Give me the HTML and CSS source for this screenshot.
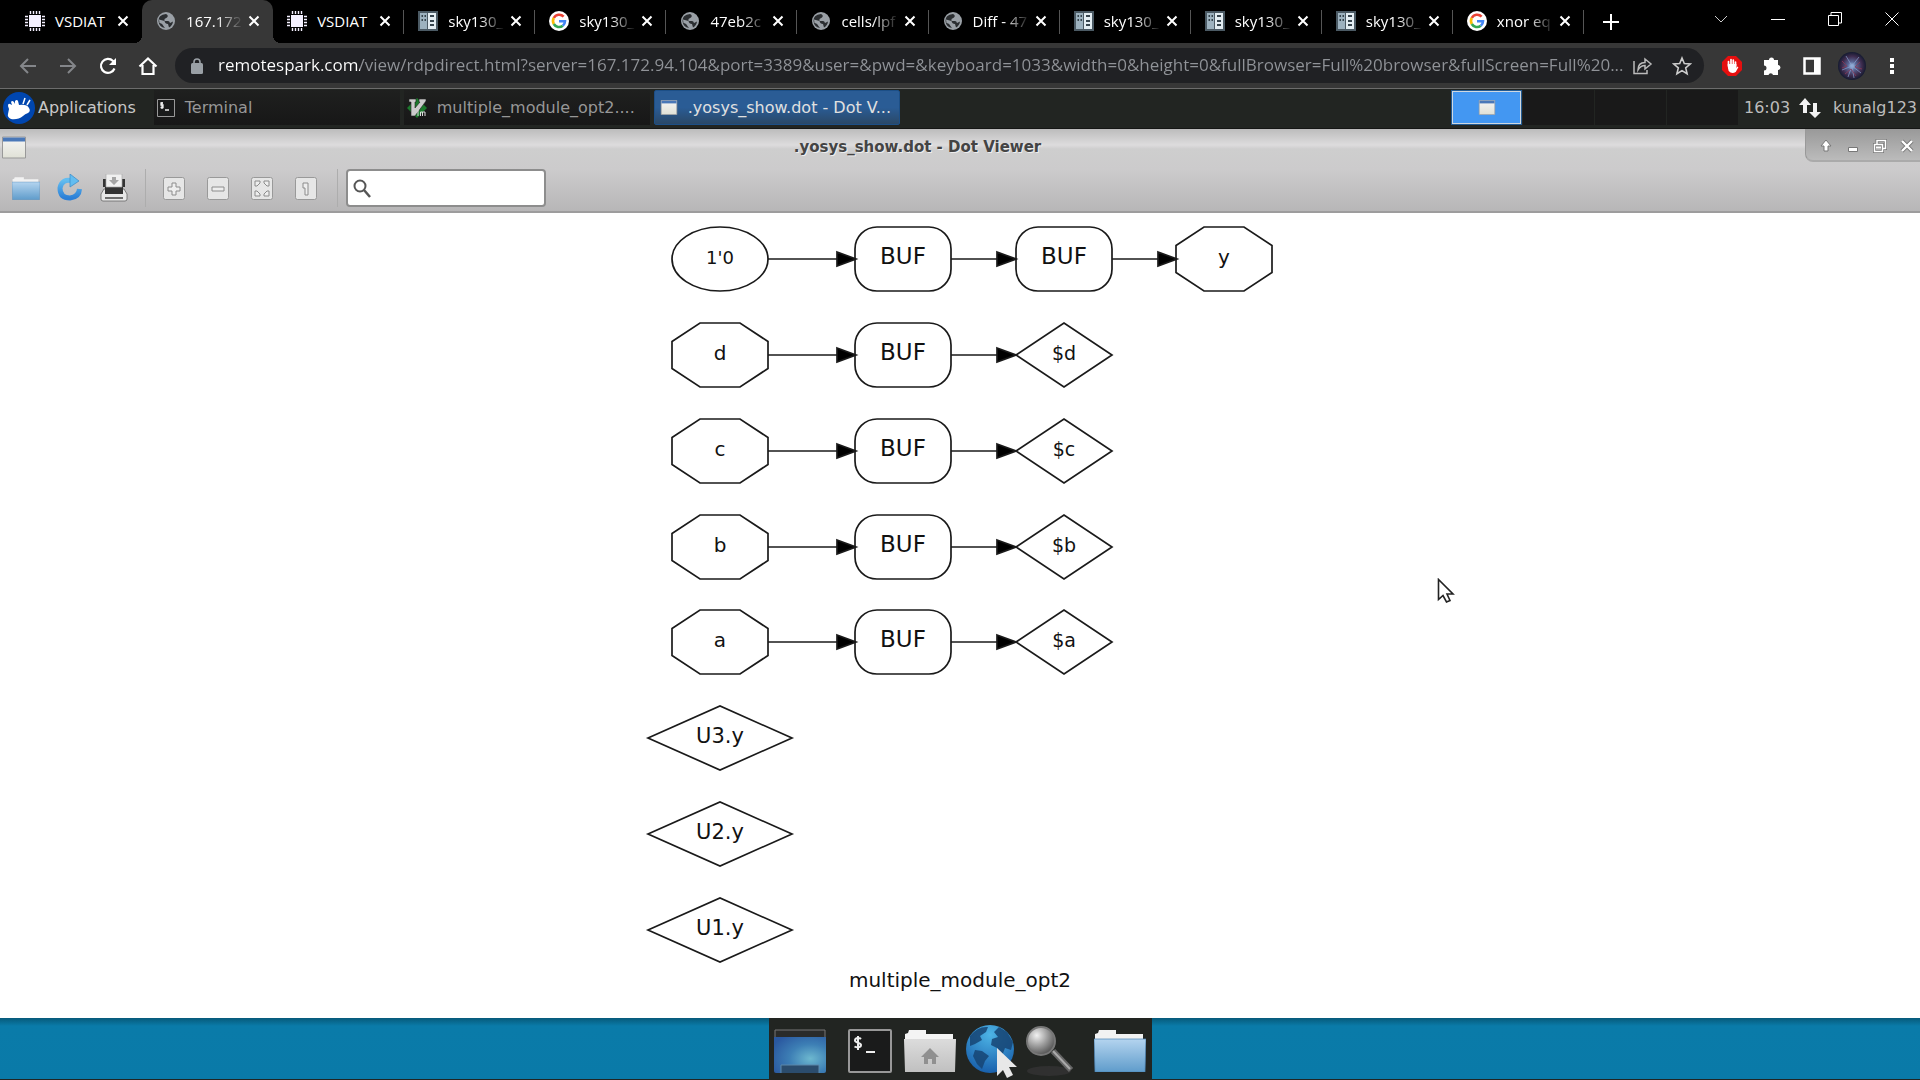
FILE: index.html
```
<!DOCTYPE html>
<html lang="en">
<head>
<meta charset="utf-8">
<title>.yosys_show.dot - Dot Viewer</title>
<link rel="stylesheet" href="styles.css">
</head>
<body>
<svg class="defs" aria-hidden="true">
  <defs>
    <linearGradient id="blueFolder" x1="0" y1="0" x2="0" y2="1"><stop offset="0" stop-color="#b4d4ef"/><stop offset="1" stop-color="#5f9ccb"/></linearGradient>
    <linearGradient id="greyFolder" x1="0" y1="0" x2="0" y2="1"><stop offset="0" stop-color="#dcdcdc"/><stop offset="1" stop-color="#c0c0c0"/></linearGradient>
    <linearGradient id="arrowBlue" x1="0" y1="0" x2="0" y2="1"><stop offset="0" stop-color="#63bdf0"/><stop offset="1" stop-color="#2c7fd6"/></linearGradient>
    <linearGradient id="windowFill" x1="0" y1="0" x2="0" y2="1"><stop offset="0" stop-color="#f6f6f6"/><stop offset="1" stop-color="#e0e1d6"/></linearGradient>
    <radialGradient id="deskFill" cx=".7" cy=".6" r=".8"><stop offset="0" stop-color="#6db8cf"/><stop offset=".5" stop-color="#3d7fb5"/><stop offset="1" stop-color="#2a58a0"/></radialGradient>
    <radialGradient id="globeFill" cx=".5" cy=".2" r=".9"><stop offset="0" stop-color="#4db4e6"/><stop offset="1" stop-color="#1255a4"/></radialGradient>
    <radialGradient id="lensFill" cx=".35" cy=".3" r=".8"><stop offset="0" stop-color="#f2f2f2"/><stop offset=".5" stop-color="#999"/><stop offset="1" stop-color="#444"/></radialGradient>
    <radialGradient id="avatarFill"><stop offset="0" stop-color="#a9cdf0"/><stop offset=".3" stop-color="#5a6796"/><stop offset=".7" stop-color="#3e2c4e"/><stop offset="1" stop-color="#141a30"/></radialGradient>
    <symbol id="chip" viewBox="0 0 20 20"><path d="M4 4h12v12H4z" fill="#f4f0ff"/><path d="M5.500 0v3M8.500 0v3M11.500 0v3M14.500 0v3M5.500 17v3M8.500 17v3M11.500 17v3M14.500 17v3M0 5.500h3M0 8.500h3M0 11.500h3M0 14.500h3M17 5.500h3M17 8.500h3M17 11.500h3M17 14.500h3" stroke="#f4f0ff" stroke-width="1.400"/></symbol>
    <symbol id="world" viewBox="0 0 20 20"><circle cx="10" cy="10" r="9" fill="#9aa0a6"/><path d="M10 3q3 1.500 1 3.500L8.500 8v2H12q1.500 0 2 2l3-1.500q-.5 4-4 6l-1-3.500q-3 0-3.500-3L3 8.500 3.500 12q2 0 3 1.500T9 17q-6-1-6.500-7T10 3z" fill="#2b2e31"/></symbol>
    <symbol id="doc" viewBox="0 0 20 20"><path d="M0 0h20v20H0z" fill="#4b5a64"/><path d="M2 2h7v16H2z" fill="#9db2bf"/><path d="M10 2h8v16h-8z" fill="#e3edf2"/><path d="M3.500 4h1.500v2H3.500zM6.500 4H8v2H6.500zM3.500 8h1.500v2H3.500zM6.500 8H8v2H6.500zM12 4h4v2h-4zM12 9h4v2h-4zM12 13h4v2h-4z" fill="#36444d"/></symbol>
    <symbol id="google" viewBox="0 0 20 20"><circle cx="10" cy="10" r="10" fill="#fff"/><g fill="none" stroke-width="2.600"><path d="M4.800 7a6 6 0 0 1 9.800-1.300" stroke="#ea4335"/><path d="M4.800 13a6 6 0 0 1 0-6" stroke="#fbbc05"/><path d="M13.800 14.700a6 6 0 0 1-9-1.700" stroke="#34a853"/><path d="M10 10.200h6a6 6 0 0 1-2.200 4.500" stroke="#4285f4"/></g></symbol>
    <symbol id="cross" viewBox="0 0 12 12"><path d="M1.500 1.500l9 9M10.500 1.500l-9 9" stroke="#fff" stroke-width="2"/></symbol>
    <symbol id="window" viewBox="0 0 24 22"><path d="M.5.5h23v21H.5z" fill="url(#windowFill)" stroke="#999"/><path d="M1 1h22v4H1z" fill="#4a78b8"/></symbol>
    <symbol id="terminal" viewBox="0 0 44 44"><rect x="1" y="1" width="42" height="42" rx="1" fill="#1a1b1b" stroke="#989898" stroke-width="2"/><path d="M13 10c-2-2-6-1-6 1.500s6 2 6 4.500-4 3-6.500 1.500M10 7v14M18 23h9" fill="none" stroke="#eee" stroke-width="2"/></symbol>
    <symbol id="terminalSmall" viewBox="0 0 18 18"><path d="M.5.500h17v17H.5z" fill="#1a1b1b" stroke="#999"/><path d="M6 4H4v2h2v2.500H3.500M5 3v7M8 11h4" fill="none" stroke="#eee" stroke-width="1.300"/></symbol>
    <symbol id="folder" viewBox="0 0 52 42"><path d="M1 8V4l3-1 1-3h17v4h27v6H1z" fill="#f2f2f2"/><path d="M0 9h52l-1 33H1z" fill="url(#blueFolder)" stroke="#4c84b5" stroke-width=".7"/></symbol>
  </defs>
</svg>

<header class="browser">
  <div class="tabstrip">
    <nav class="tabs" aria-label="Tabs">
      <div class="tab"><svg class="favicon"><use href="#chip"/></svg><a href="#">VSDIAT</a><button aria-label="Close tab"><svg><use href="#cross"/></svg></button></div>
      <div class="tab fade active"><svg class="favicon"><use href="#world"/></svg><a href="#">167.172</a><button aria-label="Close tab"><svg><use href="#cross"/></svg></button></div>
      <div class="tab ruled"><svg class="favicon"><use href="#chip"/></svg><a href="#">VSDIAT</a><button aria-label="Close tab"><svg><use href="#cross"/></svg></button></div>
      <div class="tab fade ruled"><svg class="favicon"><use href="#doc"/></svg><a href="#">sky130_</a><button aria-label="Close tab"><svg><use href="#cross"/></svg></button></div>
      <div class="tab fade ruled"><svg class="favicon"><use href="#google"/></svg><a href="#">sky130_</a><button aria-label="Close tab"><svg><use href="#cross"/></svg></button></div>
      <div class="tab fade ruled"><svg class="favicon"><use href="#world"/></svg><a href="#">47eb2c</a><button aria-label="Close tab"><svg><use href="#cross"/></svg></button></div>
      <div class="tab fade ruled"><svg class="favicon"><use href="#world"/></svg><a href="#">cells/lpf</a><button aria-label="Close tab"><svg><use href="#cross"/></svg></button></div>
      <div class="tab fade ruled"><svg class="favicon"><use href="#world"/></svg><a href="#">Diff - 47</a><button aria-label="Close tab"><svg><use href="#cross"/></svg></button></div>
      <div class="tab fade ruled"><svg class="favicon"><use href="#doc"/></svg><a href="#">sky130_</a><button aria-label="Close tab"><svg><use href="#cross"/></svg></button></div>
      <div class="tab fade ruled"><svg class="favicon"><use href="#doc"/></svg><a href="#">sky130_</a><button aria-label="Close tab"><svg><use href="#cross"/></svg></button></div>
      <div class="tab fade ruled"><svg class="favicon"><use href="#doc"/></svg><a href="#">sky130_</a><button aria-label="Close tab"><svg><use href="#cross"/></svg></button></div>
      <div class="tab fade ruled"><svg class="favicon"><use href="#google"/></svg><a href="#">xnor eq</a><button aria-label="Close tab"><svg><use href="#cross"/></svg></button></div>
    </nav>
    <button class="newtab" aria-label="New tab"><svg width="16" height="16"><path d="M8 0v16M0 8h16" stroke="#fff" stroke-width="2"/></svg></button>
    <div class="winctl">
      <button aria-label="Search tabs"><svg width="14" height="14"><path d="M1 4l6 6 6-6" fill="none" stroke="#ccc"/></svg></button>
      <button aria-label="Minimize"><svg width="14" height="14"><path d="M0 7.500h14" stroke="#fff"/></svg></button>
      <button aria-label="Restore"><svg width="14" height="14"><path d="M.5 3.500h10v10H.5zM3 3V.5h10.500V11H11" fill="none" stroke="#fff"/></svg></button>
      <button aria-label="Close"><svg width="14" height="14"><path d="M.5.5l13 13M13.500.5l-13 13" stroke="#fff"/></svg></button>
    </div>
  </div>
  <div class="navbar">
    <div class="navbtns">
      <button aria-label="Back"><svg width="20" height="20"><path d="M18 10H3M10 3l-7 7 7 7" fill="none" stroke="#84868a" stroke-width="2"/></svg></button>
      <button aria-label="Forward"><svg width="20" height="20"><path d="M2 10h15M10 3l7 7-7 7" fill="none" stroke="#84868a" stroke-width="2"/></svg></button>
      <button aria-label="Reload"><svg width="20" height="20"><path d="M16.500 12.500A7 7 0 1 1 15 5l2 2" fill="none" stroke="#fff" stroke-width="2.200"/><path d="M18 2v7h-7z" fill="#fff"/></svg></button>
      <button aria-label="Home"><svg width="20" height="20"><path d="M1.500 10.500L10 2.500l8.500 8M4.500 9v9h11V9" fill="none" stroke="#fff" stroke-width="2.200"/></svg></button>
    </div>
    <div class="omnibox">
      <svg width="12" height="16"><rect y="5" width="12" height="11" rx="1.500" fill="#9aa0a6"/><path d="M3 6V4a3 3 0 0 1 6 0v2" fill="none" stroke="#9aa0a6" stroke-width="1.600"/></svg>
      <input class="url" aria-label="Address" value="remotespark.com/view/rdpdirect.html?server=167.172.94.104&amp;port=3389&amp;user=&amp;pwd=&amp;keyboard=1033&amp;width=0&amp;height=0&amp;fullBrowser=Full%20browser&amp;fullScreen=Full%20...">
      <button aria-label="Share"><svg width="20" height="20"><path d="M1 5v12.500h13V14M5 14c0-5 3-7.500 7-7.500V3l6 5-6 5V9.500c-3 0-5 1-7 4.500z" fill="none" stroke="#bbb" stroke-width="1.500"/></svg></button>
      <button aria-label="Bookmark"><svg width="20" height="20"><path d="M10 2l2.300 5.500 6 .5-4.600 3.900 1.400 5.800L10 14.600l-5.100 3.100 1.400-5.800L1.700 8l6-.5z" fill="none" stroke="#ccc" stroke-width="1.600"/></svg></button>
    </div>
    <div class="exts">
      <button aria-label="Ad blocker"><svg width="20" height="20"><path d="M6 0h8l6 6v8l-6 6H6l-6-6V6z" fill="#e60f0f"/><path d="M6.500 10V5.500M9 9V3.500M11.300 9V4M13.500 10V6" stroke="#fff" stroke-width="1.700" stroke-linecap="round"/><path d="M5.700 8h8.700v4l1-1.500 1 .8-2.700 4.700q-4 2.500-7-1-1-2-1-7z" fill="#fff"/></svg></button>
      <button aria-label="Extensions"><svg width="20" height="20"><path d="M2 4h5a2.500 2.500 0 0 1 5 0h4v5a2.500 2.500 0 0 1 0 5v5h-5a2.300 2.300 0 0 0-4.500 0H2v-4.500a2.500 2.500 0 0 0 0-5z" fill="#fff"/></svg></button>
      <button aria-label="Side panel"><svg width="20" height="20"><path d="M2.500 2.500h15v15h-15z" fill="none" stroke="#fff" stroke-width="2.500"/><path d="M12 2h6v16h-6z" fill="#fff"/></svg></button>
      <button aria-label="Profile"><svg width="28" height="28"><circle cx="14" cy="14" r="14" fill="url(#avatarFill)"/><path d="M14 14L8 4M14 14l7-9M14 14L4 18M14 14l9 7M14 14l-4 11M14 14l2 12" stroke="#88a0d0" stroke-width="1" opacity=".7"/><path d="M4 9l5 5-5 2M22 10l-5 5 7 2M7 22l6-5 5 7" fill="none" stroke="#8b3a56" opacity=".8"/></svg></button>
      <button aria-label="Menu"><svg width="20" height="20"><path d="M8 2h4v4H8zM8 8h4v4H8zM8 14h4v4H8z" fill="#fff"/></svg></button>
    </div>
  </div>
</header>

<div class="panel">
  <button class="apps"><svg width="32" height="32"><circle cx="16" cy="16" r="16" fill="#0046af"/><path d="M6 17l-1-3q0-3 2-2l2 1-1-3q1-2 3 0l1 2V9q2-2 3 0l1 4q8-1 10 3 2 3-1 5-3 1-5 3-5 4-12 3-4-2-3-5z" fill="#fff"/><path d="M20 12l2-6M24 13l3-5" stroke="#fff" stroke-width="1.500"/></svg>Applications</button>
  <div class="tasks">
    <button class="task"><svg width="18" height="18"><use href="#terminalSmall"/></svg><span>Terminal</span></button>
    <button class="task"><svg width="20" height="20"><path d="M10 0l10 10-10 10L0 10z" fill="#1b7a2c"/><path d="M2 1h7v3H8v6l5-6h-1V1h7v2L8 18H4V4H2z" fill="#ccc" stroke="#222" stroke-width=".6"/><path d="M11 12v6M13.500 18v-4h2v4M15.500 14h2.500v4" fill="none" stroke="#ddd" stroke-width="1"/></svg><span>multiple_module_opt2....</span></button>
    <button class="task current"><svg width="18" height="15"><use href="#window"/></svg><span>.yosys_show.dot - Dot V...</span></button>
  </div>
  <div class="pager">
    <button class="on" aria-label="Workspace 1"><svg width="18" height="15"><use href="#window"/></svg></button>
    <button aria-label="Workspace 2"></button>
    <button aria-label="Workspace 3"></button>
    <button aria-label="Workspace 4"></button>
  </div>
  <time class="clock">16:03</time>
  <svg class="net" width="22" height="22"><path d="M6 1l6 7H8v8H4V8H0zM16 21l-6-6h4V6h4v9h4z" fill="#f2f2f2"/></svg>
  <button class="user">kunalg123</button>
</div>

<main class="viewer">
  <div class="chrome">
    <div class="titlebar">
      <svg width="24" height="23"><use href="#window"/></svg>
      <h1>.yosys_show.dot - Dot Viewer</h1>
      <div class="frame">
        <button aria-label="Shade"><svg width="14" height="14"><path d="M7 1l5 6H9v5H5V7H2z" fill="#fff" stroke="#777"/></svg></button>
        <button aria-label="Minimize"><svg width="14" height="14"><path d="M2.500 8.500h9v4h-9z" fill="#fff" stroke="#777"/></svg></button>
        <button aria-label="Restore"><svg width="14" height="14"><path d="M4 5V1.500h8.500v8H10M1.500 5.500h8v7h-8z" fill="none" stroke="#777" stroke-width="3"/><path d="M4 5V1.500h8.500v8H10M1.500 5.500h8v7h-8zM3 8.500h5" fill="none" stroke="#fff" stroke-width="1.500"/></svg></button>
        <button aria-label="Close"><svg width="14" height="14"><path d="M2 2l10 10M12 2L2 12" stroke="#777" stroke-width="4"/><path d="M2 2l10 10M12 2L2 12" stroke="#fff" stroke-width="2.400"/></svg></button>
      </div>
    </div>
    <div class="toolbar">
      <div class="tools">
        <button aria-label="Open"><svg width="28" height="23"><use href="#folder"/></svg></button>
        <button aria-label="Reload"><svg width="28" height="28"><path d="M17 7Q6 4 4 14q0 10 10 10 9-1 9.500-9" fill="none" stroke="url(#arrowBlue)" stroke-width="5"/><path d="M14 0l9 7-9 6z" fill="#63bdf0" stroke="#3689c9" stroke-width=".7"/></svg></button>
        <button aria-label="Print"><svg width="28" height="28"><path d="M1 20l3-5h20l3 5v5q0 2-2 2H3q-2 0-2-2z" fill="#e8e8e8" stroke="#666" stroke-width=".8"/><path d="M5 12h18v8H5zM3 5h3v8H3zM22 5h3v8h-3z" fill="#333"/><path d="M6 0h16v13H6z" fill="#f0f0f0" stroke="#aaa" stroke-width=".7"/><path d="M12 3h4v3h3l-5 5-5-5h3z" fill="#a5a5a5"/><path d="M5 24h18" stroke="#444" stroke-width="1.500"/></svg></button>
      </div>
      <div class="tools">
        <button aria-label="Zoom in"><svg width="22" height="23"><rect x=".5" y=".5" width="21" height="22" rx="2" fill="#e6e6e6" stroke="#999"/><path d="M9 6h4v4h4v4h-4v4H9v-4H5v-4h4z" fill="#eee" stroke="#8c8c8c"/></svg></button>
        <button aria-label="Zoom out"><svg width="22" height="23"><rect x=".5" y=".5" width="21" height="22" rx="2" fill="#e6e6e6" stroke="#999"/><path d="M5 10h12v4H5z" fill="#eee" stroke="#8c8c8c"/></svg></button>
        <button aria-label="Zoom to fit"><svg width="22" height="23"><rect x=".5" y=".5" width="21" height="22" rx="2" fill="#e6e6e6" stroke="#999"/><path d="M4 4h5v2l-3 3H4zM18 4h-5v2l3 3h2zM4 19h5v-2l-3-3H4zM18 19h-5v-2l3-3h2z" fill="#eee" stroke="#8c8c8c"/></svg></button>
        <button aria-label="Actual size"><svg width="22" height="23"><rect x=".5" y=".5" width="21" height="22" rx="2" fill="#e6e6e6" stroke="#999"/><path d="M8 6h5v12h-3v-7H8z" fill="#eee" stroke="#8c8c8c"/></svg></button>
      </div>
      <label class="search"><svg width="18" height="20"><circle cx="7" cy="8" r="5.500" fill="none" stroke="#555" stroke-width="2"/><path d="M11 12l6 7" stroke="#555" stroke-width="2.500"/></svg><input type="text" aria-label="Search"></label>
    </div>
  </div>
  <div class="canvas">
    <svg class="graph" width="640" height="780" viewBox="640 218 640 780" role="img" aria-label="multiple_module_opt2">
      <defs>
        <path id="oct" d="M-20-32h40l28 18.500v27L20 32h-40l-28-18.500v-27z"/>
        <rect id="buf" x="-48" y="-32" width="96" height="64" rx="22"/>
        <path id="dia" d="M-48 0L0-32 48 0 0 32z"/>
        <path id="wide" d="M-72 0L0-32 72 0 0 32z"/>
        <g id="long"><path d="M768 0h70"/><path class="head" d="M837-7l19 7-19 7z"/></g>
        <g id="short"><path d="M951 0h48"/><path class="head" d="M997-7l19 7-19 7z"/></g>
      </defs>
      <g transform="translate(0 259)"><ellipse cx="720" rx="48" ry="32"/><use href="#long"/><use href="#buf" x="903"/><use href="#short"/><use href="#buf" x="1064"/><use href="#short" x="161"/><use href="#oct" x="1224"/><text class="s" x="720" y="5">1'0</text><text class="l" x="903" y="5">BUF</text><text class="l" x="1064" y="5">BUF</text><text x="1224" y="5">y</text></g>
      <g transform="translate(0 355)"><use href="#oct" x="720"/><use href="#long"/><use href="#buf" x="903"/><use href="#short"/><use href="#dia" x="1064"/><text x="720" y="5">d</text><text class="l" x="903" y="5">BUF</text><text class="d" x="1064" y="5">$d</text></g>
      <g transform="translate(0 451)"><use href="#oct" x="720"/><use href="#long"/><use href="#buf" x="903"/><use href="#short"/><use href="#dia" x="1064"/><text x="720" y="5">c</text><text class="l" x="903" y="5">BUF</text><text class="d" x="1064" y="5">$c</text></g>
      <g transform="translate(0 547)"><use href="#oct" x="720"/><use href="#long"/><use href="#buf" x="903"/><use href="#short"/><use href="#dia" x="1064"/><text x="720" y="5">b</text><text class="l" x="903" y="5">BUF</text><text class="d" x="1064" y="5">$b</text></g>
      <g transform="translate(0 642)"><use href="#oct" x="720"/><use href="#long"/><use href="#buf" x="903"/><use href="#short"/><use href="#dia" x="1064"/><text x="720" y="5">a</text><text class="l" x="903" y="5">BUF</text><text class="d" x="1064" y="5">$a</text></g>
      <g transform="translate(0 738)"><use href="#wide" x="720"/><text class="m" x="720" y="5">U3.y</text></g>
      <g transform="translate(0 834)"><use href="#wide" x="720"/><text class="m" x="720" y="5">U2.y</text></g>
      <g transform="translate(0 930)"><use href="#wide" x="720"/><text class="m" x="720" y="5">U1.y</text></g>
      <text x="960" y="987">multiple_module_opt2</text>
    </svg>
    <svg class="cursor" width="18" height="26"><path d="M1.500 1.500v20l4.500-4 3.500 6.500 3.500-1.500-3-6.500H16z" fill="#fff" stroke="#222" stroke-width="1.600"/></svg>
  </div>
</main>

<footer class="desktop">
  <div class="dock">
    <button aria-label="Show desktop"><svg width="52" height="44"><path d="M0 8h52v34q0 2-2 2H2q-2 0-2-2z" fill="url(#deskFill)"/><path d="M1 8V1h50v7" fill="#2a2b2a" stroke="#777"/><path d="M7 44v-8h38v8" fill="#2b4c6c" stroke="#5c88aa"/></svg></button>
    <button class="term" aria-label="Terminal"><svg width="44" height="44"><use href="#terminal"/></svg></button>
    <button aria-label="Home folder"><svg width="52" height="42"><path d="M1 8V4l3-1 1-3h17v4h27v6H1z" fill="#f4f4f4"/><path d="M0 9h52l-1 33H1z" fill="url(#greyFolder)"/><path d="M26 18l9 9h-3v7h-4v-5h-4v5h-4v-7h-3z" fill="#909090"/></svg></button>
    <button class="web" aria-label="Web browser"><svg width="52" height="54"><circle cx="25" cy="25" r="24" fill="url(#globeFill)"/><path d="M5 12q8-10 18-9l-2 5-6 4 2 4-7 4-5 2zM10 26l7 1 7 5-4 5-3 8-5-5-4-8zM29 8l5-5 8 5 6 10-2 8-6-2-3 8-5-8-6-3 1-6 6-2z" fill="#164473" opacity=".85"/><path d="M32 24v28l6-6 4 8 6-3-4-8h8z" fill="#e8e8e8"/></svg></button>
    <button class="find" aria-label="Search"><svg width="52" height="50"><ellipse cx="24" cy="45" rx="22" ry="5" fill="#303030"/><path d="M28 25l18 19" stroke="#666" stroke-width="6"/><path d="M28 25l17 18" stroke="#aaa" stroke-width="2"/><circle cx="16" cy="15" r="14" fill="url(#lensFill)" stroke="#777" stroke-width="2"/></svg></button>
    <button class="last" aria-label="Files"><svg width="52" height="42"><use href="#folder"/></svg></button>
  </div>
</footer>
</body>
</html>
```
FILE: styles.css
```
* { box-sizing: border-box; }
body {
  margin: 0;
  min-height: 100vh;
  display: flex;
  flex-direction: column;
  font-family: "DejaVu Sans", sans-serif;
  background: #222522;
  overflow-x: hidden;
}
button {
  display: flex;
  align-items: center;
  justify-content: center;
  flex: none;
  padding: 0;
  border: 0;
  background: none;
  color: inherit;
  font: inherit;
}
input { min-width: 0; padding: 0; border: 0; outline: 0; background: none; font: inherit; }
svg { flex: none; display: block; }
.defs { position: absolute; width: 0; height: 0; }

/* Browser */
.browser {
  font-family: "Open Sans", sans-serif;
  color: #fff;
  background: #373737;
  border-bottom: 1px solid #6c6c6c;
}
.tabstrip { display: flex; height: 43px; background: #000; }
.tabs { display: flex; flex: 1; min-width: 0; padding-left: 11px; }
.tab {
  position: relative;
  display: flex;
  flex: 1;
  align-items: center;
  min-width: 0;
  padding: 0 13px 2px 14px;
}
.tab a {
  flex: 1;
  min-width: 0;
  margin: 0 5px 0 10px;
  white-space: nowrap;
  color: #fff;
  font-size: 15px;
  line-height: 20px;
  text-decoration: none;
}
.fade a {
  -webkit-mask-image: linear-gradient(90deg, #000 55%, transparent);
  mask-image: linear-gradient(90deg, #000 55%, transparent);
}
.favicon { width: 20px; height: 20px; }
.tab button svg { width: 12px; height: 12px; }
.ruled::after {
  content: "";
  position: absolute;
  right: 0;
  top: 10px;
  width: 1px;
  height: 24px;
  background: #555;
}
.active { background: #373737; border-radius: 10px 10px 0 0; }
.active::before, .active::after {
  content: "";
  position: absolute;
  bottom: 0;
  width: 8px;
  height: 8px;
}
.active::before { right: 100%; background: radial-gradient(circle at 0 0, #000 8px, #373737 8px); }
.active::after { left: 100%; background: radial-gradient(circle at 100% 0, #000 8px, #373737 8px); }
.newtab { width: 54px; }
.winctl { display: flex; width: 282px; padding: 0 0 6px 54px; }
.winctl button { flex: 1; }
.navbar { display: flex; align-items: center; height: 45px; padding: 0 8px; }
.navbtns { display: flex; width: 167px; }
.navbtns button { width: 40px; }
.omnibox {
  display: flex;
  flex: 1;
  align-items: center;
  min-width: 0;
  height: 35px;
  padding: 0 12px 0 16px;
  border-radius: 18px;
  background: #202124;
}
.omnibox button { width: 39px; }
.omnibox button:last-child { width: 20px; margin-left: 10px; }
.url {
  flex: 1;
  height: 30px;
  margin: 0 0 2px 15px;
  font-size: 17px;
  color: #9aa0a6;
  background: linear-gradient(90deg, #fff 142px, #909398 142px);
  -webkit-background-clip: text;
  background-clip: text;
  -webkit-text-fill-color: transparent;
}
.exts { display: flex; padding-left: 8px; }
.exts button { width: 40px; }

/* Desktop panel */
.panel {
  display: flex;
  align-items: center;
  height: 40px;
  padding-bottom: 2px;
  border-bottom: 1px solid #151615;
  background: #222522;
  color: #bcbcbc;
  font-size: 16px;
}
.apps { gap: 3px; padding-left: 3px; color: #c8c8c8; }
.tasks { display: flex; flex: 1; gap: 4px; margin-left: 18px; }
.task {
  justify-content: flex-start;
  gap: 10px;
  width: 246px;
  height: 35px;
  padding: 0 3px;
  background: linear-gradient(#1f201f, #171717);
  color: #979797;
  white-space: nowrap;
}
.current {
  padding: 0 5px;
  border: 1px solid #1c4f87;
  border-radius: 2px;
  background: linear-gradient(#2a5c95 50%, #2a4867);
  color: #e0e0e0;
}
.pager { display: flex; gap: 1px; }
.pager button { width: 71px; height: 35px; background: #191919; }
.pager .on { border: 2px solid #d0d8e0; background: #4397f2; outline: 1px solid #235b93; outline-offset: -1px; }
.clock { width: 61px; padding-left: 6px; }
.user { padding: 0 3px 0 12px; }

/* Viewer window */
.viewer { display: flex; flex: 1; flex-direction: column; }
.chrome {
  border-bottom: 2px solid #9d9c9d;
  background: linear-gradient(#bcbcbc, #dddcdd 16px, #cecece 20px, #cccbcc 40px, #b7b6b7);
}
.titlebar { display: flex; align-items: center; height: 36px; padding-left: 2px; }
.titlebar h1 {
  flex: 1;
  margin: 0;
  padding-left: 4px;
  text-align: center;
  font-size: 15px;
  line-height: 20px;
  color: #444;
  text-shadow: 1px 1px 0 #eee;
}
.frame {
  display: flex;
  align-self: flex-start;
  align-items: center;
  height: 33px;
  padding: 2px 0 0 6px;
  border-radius: 0 0 0 8px;
  border-left: 1px solid #999;
  border-bottom: 2px solid #aaa;
  background: linear-gradient(#999, #bbb);
}
.frame button { width: 27px; }
.toolbar { display: flex; align-items: center; height: 46px; padding-left: 4px; }
.tools { display: flex; align-items: center; height: 38px; padding-right: 9px; margin-right: 6px; border-right: 1px solid #adadad; }
.tools button { width: 44px; }
.search {
  display: flex;
  align-items: center;
  width: 200px;
  height: 38px;
  margin-left: 2px;
  padding: 0 5px;
  border: 2px solid #8d8d8d;
  border-radius: 4px;
  background: #fff;
}
.search input { flex: 1; margin-left: 6px; font-size: 16px; }
.canvas {
  position: relative;
  display: flex;
  flex: 1;
  justify-content: center;
  padding: 5px 0 20px;
  background: #fff;
}
.graph { fill: none; stroke: #1a1a1a; stroke-width: 1.7; }
.graph .head { fill: #000; }
.graph text { fill: #111; stroke: none; font-size: 20px; text-anchor: middle; }
.graph .s { font-size: 18px; }
.graph .d { font-size: 19px; }
.graph .m { font-size: 21px; }
.graph .l { font-size: 23px; }
.cursor { position: absolute; left: 1437px; top: 365px; }

/* Dock */
.desktop {
  display: flex;
  justify-content: center;
  border-bottom: 2px solid #222522;
  background: linear-gradient(#075a7a, #0a7ba9 8px, #0a7aa8);
}
.dock { display: flex; height: 61px; align-items: center; padding: 4px 4px 0 3px; background: #222522; }
.dock button { width: 56px; }
.dock .term { margin: 0 10px 0 20px; width: 44px; }
.dock .web { width: 62px; margin-left: 2px; }
.dock .find { width: 58px; }
.dock .last { margin-left: 12px; }
```
